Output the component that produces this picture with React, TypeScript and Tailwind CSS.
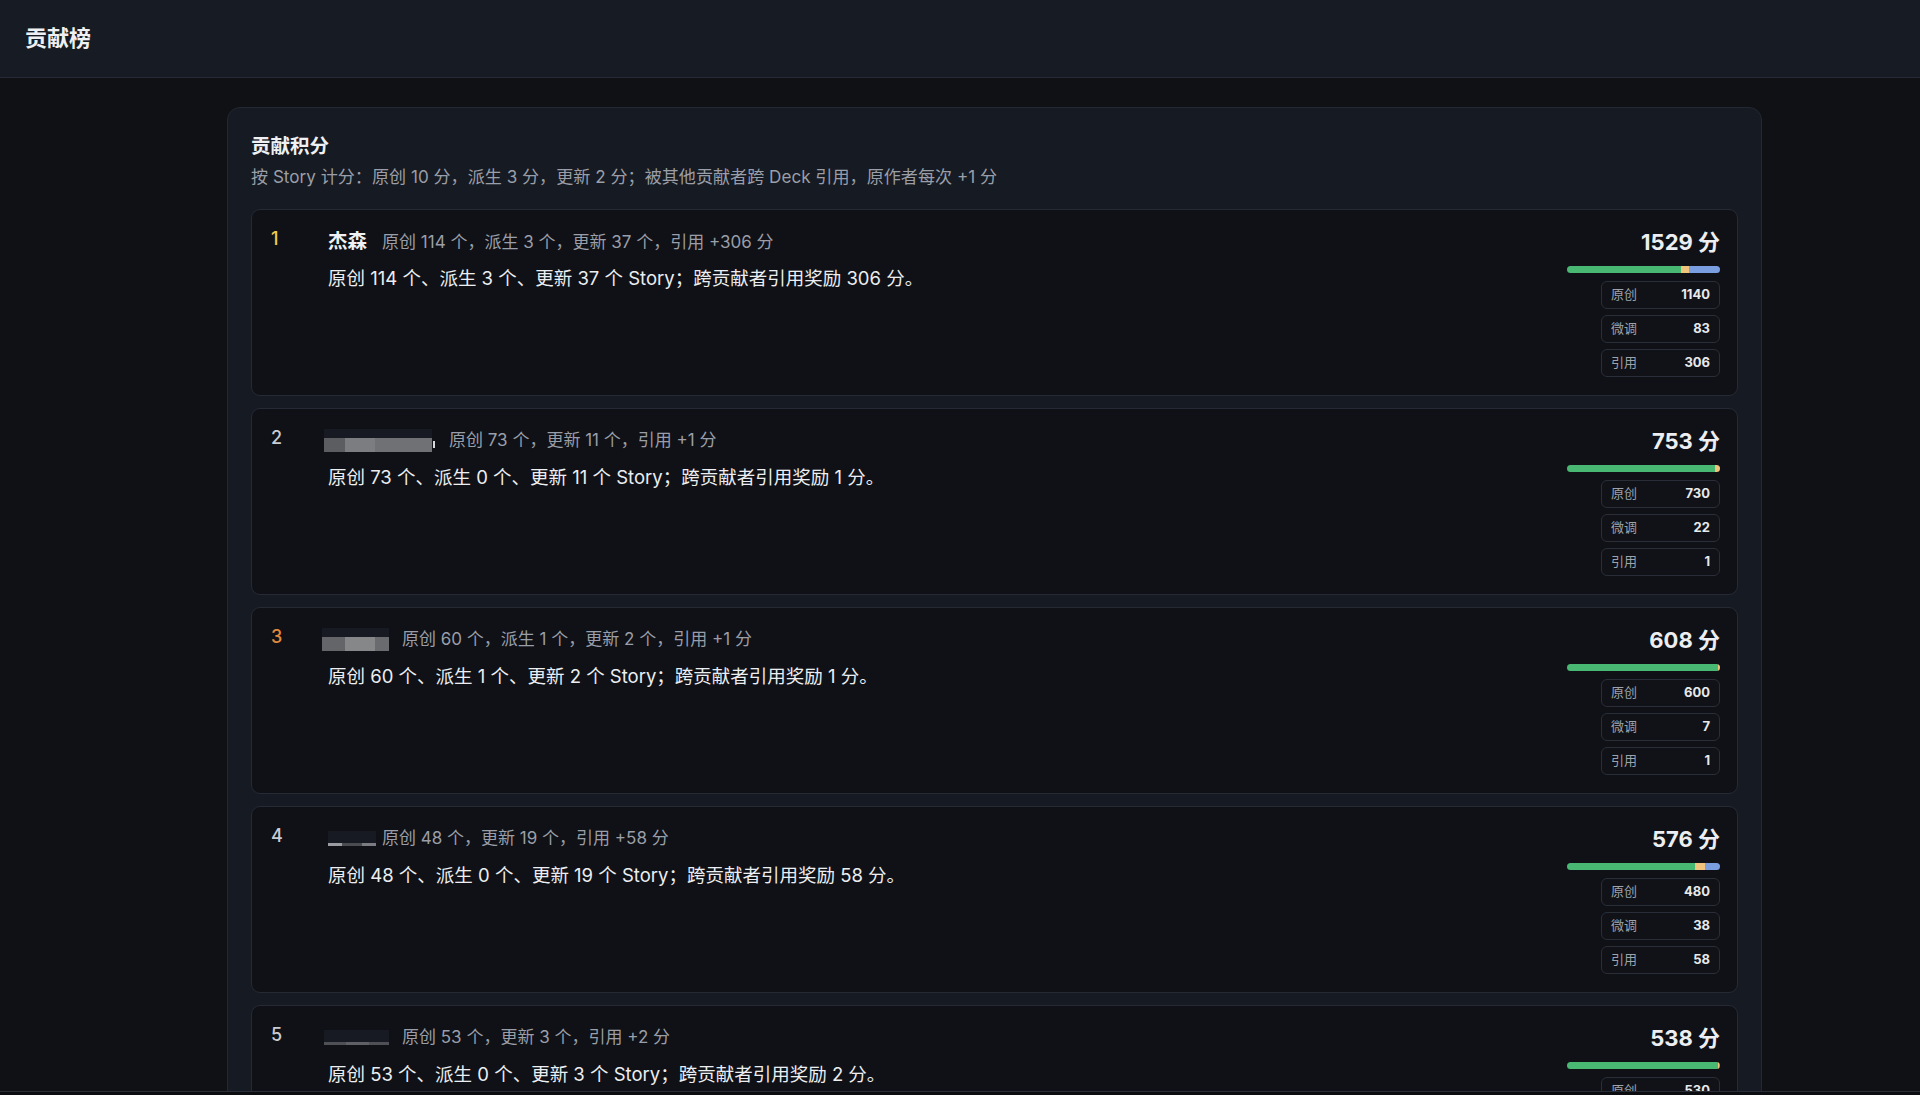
import React from 'react';

type Mask = {
  width: number;
  offset: number;
  gap: number;
  parts: { w: number; color: string }[];
  faint?: boolean;
  tail?: boolean;
};

type Entry = {
  rank: number;
  name?: string;
  mask?: Mask;
  meta: string;
  desc: string;
  score: number;
  original: number;
  tweak: number;
  cite: number;
};

const entries: Entry[] = [
  {
    rank: 1,
    name: '杰森',
    meta: '原创 114 个，派生 3 个，更新 37 个，引用 +306 分',
    desc: '原创 114 个、派生 3 个、更新 37 个 Story；跨贡献者引用奖励 306 分。',
    score: 1529,
    original: 1140,
    tweak: 83,
    cite: 306,
  },
  {
    rank: 2,
    mask: {
      width: 108,
      offset: -4,
      gap: 14,
      tail: true,
      parts: [
        { w: 21, color: '#5c5d61' },
        { w: 30, color: '#7c7d80' },
        { w: 57, color: '#707174' },
      ],
    },
    meta: '原创 73 个，更新 11 个，引用 +1 分',
    desc: '原创 73 个、派生 0 个、更新 11 个 Story；跨贡献者引用奖励 1 分。',
    score: 753,
    original: 730,
    tweak: 22,
    cite: 1,
  },
  {
    rank: 3,
    mask: {
      width: 67,
      offset: -6,
      gap: 13,
      parts: [
        { w: 23, color: '#646568' },
        { w: 30, color: '#868789' },
        { w: 14, color: '#6a6b6e' },
      ],
    },
    meta: '原创 60 个，派生 1 个，更新 2 个，引用 +1 分',
    desc: '原创 60 个、派生 1 个、更新 2 个 Story；跨贡献者引用奖励 1 分。',
    score: 608,
    original: 600,
    tweak: 7,
    cite: 1,
  },
  {
    rank: 4,
    mask: {
      width: 48,
      offset: 0,
      gap: 6,
      faint: true,
      parts: [
        { w: 14, color: '#9a9ca1' },
        { w: 20, color: '#4a4c52' },
        { w: 14, color: '#7a7c81' },
      ],
    },
    meta: '原创 48 个，更新 19 个，引用 +58 分',
    desc: '原创 48 个、派生 0 个、更新 19 个 Story；跨贡献者引用奖励 58 分。',
    score: 576,
    original: 480,
    tweak: 38,
    cite: 58,
  },
  {
    rank: 5,
    mask: {
      width: 65,
      offset: -4,
      gap: 13,
      faint: true,
      parts: [
        { w: 22, color: '#4e5055' },
        { w: 23, color: '#5e6065' },
        { w: 20, color: '#4e5055' },
      ],
    },
    meta: '原创 53 个，更新 3 个，引用 +2 分',
    desc: '原创 53 个、派生 0 个、更新 3 个 Story；跨贡献者引用奖励 2 分。',
    score: 538,
    original: 530,
    tweak: 6,
    cite: 2,
  },
];

const rankColor = (rank: number) => {
  if (rank === 1) return 'text-[#f2c94c]';
  if (rank === 3) return 'text-[#e28a3c]';
  return 'text-[#c9ccd3]';
};

const NameMask: React.FC<{ mask: Mask }> = ({ mask }) => (
  <div className="flex items-end shrink-0 self-center" style={{ marginLeft: mask.offset }}>
    <div className="flex flex-col" style={{ width: mask.width }}>
      <div className="h-[9px] bg-[#171a22]" />
      {mask.faint ? (
        <div className="flex h-[6px] bg-[#171a22] items-end">
          {mask.parts.map((p, i) => (
            <div key={i} className="h-[3px]" style={{ width: p.w, background: p.color }} />
          ))}
        </div>
      ) : (
        <div className="flex h-[14px]">
          {mask.parts.map((p, i) => (
            <div key={i} className="h-full" style={{ width: p.w, background: p.color }} />
          ))}
        </div>
      )}
    </div>
    {mask.tail && <div className="mb-[4px] ml-[1px] w-[2px] h-[7px] bg-[#d8d9dc]" />}
  </div>
);

const StatBox: React.FC<{ label: string; value: number }> = ({ label, value }) => (
  <div className="w-[119px] h-[28px] px-[9px] flex items-center justify-between rounded-[6px] border border-[#2a2e38] bg-[#101217]">
    <span className="text-[13px] text-[#9ea2ab]">{label}</span>
    <span className="text-[13px] font-bold text-[#e8e9ec]">{value}</span>
  </div>
);

const Row: React.FC<{ entry: Entry }> = ({ entry }) => {
  const total = entry.original + entry.tweak + entry.cite;
  return (
    <div className="flex shrink-0 rounded-[9px] border border-[#252a35] bg-[#0f1116] pl-[19px] pr-[17px] pt-[18px] pb-[18px]">
      <div className={`w-[57px] shrink-0 -mt-[1px] text-[18px] font-medium leading-[24px] ${rankColor(entry.rank)}`}>
        {entry.rank}
      </div>
      <div className="flex-1 min-w-0">
        <div className="flex items-baseline h-[27px]">
          {entry.name ? (
            <span className="mr-[15px] text-[19.5px] font-bold text-[#eef0f3] leading-[27px]">{entry.name}</span>
          ) : (
            entry.mask && (
              <span className="flex self-center" style={{ marginRight: entry.mask.gap }}>
                <NameMask mask={entry.mask} />
              </span>
            )
          )}
          <span className="text-[17px] text-[#9a9ea8] leading-[27px]">{entry.meta}</span>
        </div>
        <p className="mt-[10px] text-[18.5px] leading-[27px] text-[#eceef1]">{entry.desc}</p>
      </div>
      <div className="w-[153px] shrink-0 flex flex-col items-end">
        <div className="text-[22px] font-bold leading-[29px] text-[#eceef1]">{entry.score} 分</div>
        <div className="mt-[9px] w-full h-[7px] rounded-full overflow-hidden flex">
          <div className="h-full bg-[#48b873]" style={{ width: `${(entry.original / total) * 100}%` }} />
          <div className="h-full bg-[#f0c47c]" style={{ width: `${(entry.tweak / total) * 100}%` }} />
          <div className="h-full bg-[#7b9ee0]" style={{ width: `${(entry.cite / total) * 100}%` }} />
        </div>
        <div className="mt-[8px] flex flex-col gap-[6px]">
          <StatBox label="原创" value={entry.original} />
          <StatBox label="微调" value={entry.tweak} />
          <StatBox label="引用" value={entry.cite} />
        </div>
      </div>
    </div>
  );
};

const App: React.FC = () => {
  return (
    <div className="h-screen overflow-hidden bg-[#101115] text-[#eceef1] font-['Inter','Noto_Sans_CJK_SC',sans-serif]">
      <header className="h-[78px] px-[25px] flex items-center bg-[#171b24] border-b border-[#252a35]">
        <h1 className="text-[22px] font-bold text-[#eef0f3]">贡献榜</h1>
      </header>

      <main className="pt-[29px] pl-[227px] pr-[158px]">
        <section className="rounded-[13px] border border-[#232833] bg-[#161a22] px-[23px] pt-[23px] pb-[24px]">
          <h2 className="text-[19.5px] font-bold leading-[30px] text-[#eef0f3]">贡献积分</h2>
          <p className="mt-[3px] text-[17.1px] leading-[26px] text-[#9a9ea8]">
            按 Story 计分：原创 10 分，派生 3 分，更新 2 分；被其他贡献者跨 Deck 引用，原作者每次 +1 分
          </p>
          <div className="mt-[19px] flex flex-col gap-[12px]">
            {entries.map((e) => (
              <Row key={e.rank} entry={e} />
            ))}
          </div>
        </section>
      </main>

      <div className="fixed left-0 right-0 bottom-0 h-[4px] bg-[#0c0d10] border-t border-[#2a2e38]" />
    </div>
  );
};

export default App;
